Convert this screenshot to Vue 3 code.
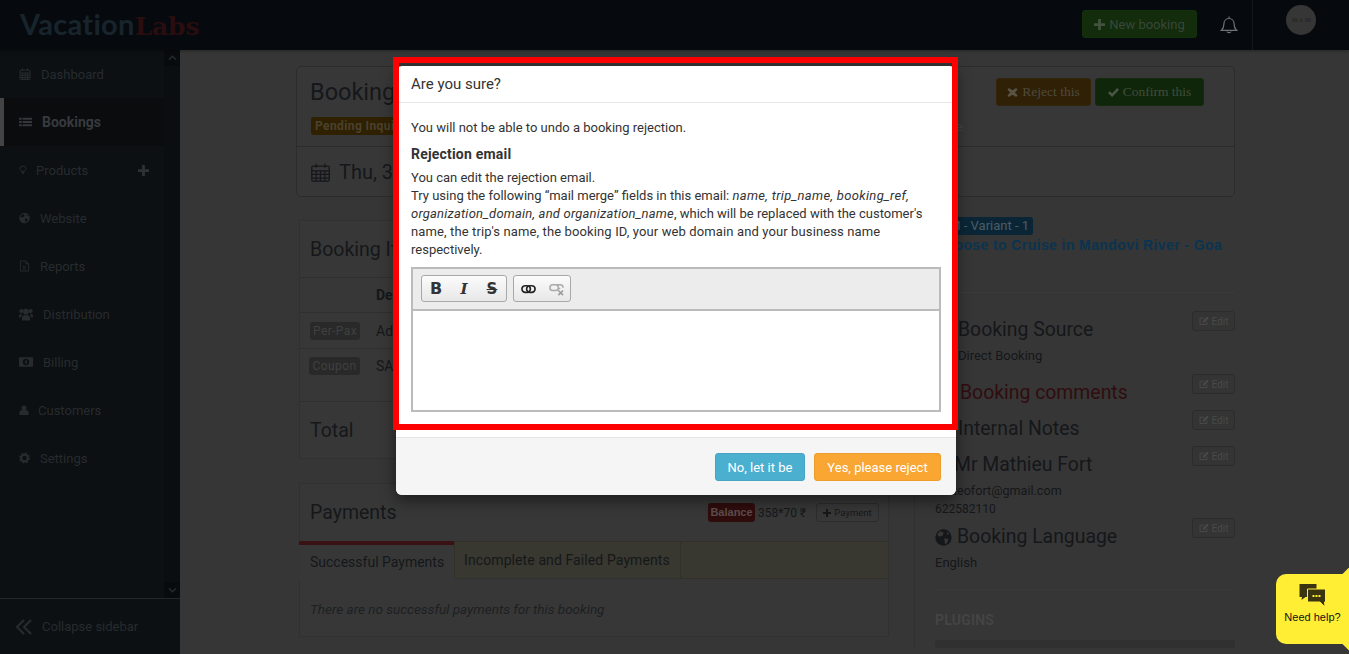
<script setup>
const nav = [
  { t: 'Dashboard', i: 'cal', w: 12, g: 10 },
  { t: 'Bookings', i: 'list', w: 13, g: 10, active: true },
  { t: 'Products', i: 'bulb', w: 8, g: 9, plus: true },
  { t: 'Website', i: 'globe', w: 11, g: 10 },
  { t: 'Reports', i: 'file', w: 11, g: 10 },
  { t: 'Distribution', i: 'users', w: 14, g: 10 },
  { t: 'Billing', i: 'money', w: 14, g: 10 },
  { t: 'Customers', i: 'user', w: 10, g: 9 },
  { t: 'Settings', i: 'cog', w: 11, g: 10 }
]
const sections = [
  { t: 'Booking Source', pad: 23, sub: ['Direct Booking'], cls: 'src' },
  { t: 'Booking comments', pad: 25, cls: 'red' },
  { t: 'Internal Notes', pad: 23 },
  { t: 'Mr Mathieu Fort', pad: 21, sub: ['mateofort@gmail.com', '622582110'], cls: 'contact' },
  { t: 'Booking Language', pad: 22, globe: true, sub: ['English'] }
]
</script>

<template>
  <div class="page">
    <header class="top">
      <div class="logo"><span class="vac">Vacation</span><span class="labs">Labs</span></div>
      <div class="top-right">
        <button class="new-btn">
          <svg class="ic11" viewBox="0 0 12 12"><path d="M4.500 0h3v4.500H12v3H7.500V12h-3V7.500H0v-3h4.500z" fill="#42523f" /></svg>
          New booking
        </button>
        <svg class="bell" viewBox="0 0 18 18" fill="none" stroke="#6f7274" stroke-width="1.200">
          <path d="M1.500 14.300c1.500-1.300 2.400-3 2.400-6.300 0-3 2.100-5.500 5.100-5.500s5.100 2.500 5.100 5.500c0 3.300.9 5 2.400 6.300z" />
          <path d="M7 15.500c.3 1.600 3.700 1.600 4 0M9 .5v2" />
        </svg>
        <div class="avatar-cell"><div class="avatar">30 x 30</div></div>
      </div>
    </header>

    <div class="row">
      <aside class="side">
        <div class="side-main">
          <nav class="nav">
            <a v-for="n in nav" :key="n.t" class="nav-item" :class="{ active: n.active }">
              <svg class="nav-ic" :style="{ width: n.w + 'px', marginRight: n.g + 'px' }" viewBox="0 0 24 24">
                <g v-if="n.i === 'cal'" fill="none" stroke="#272b2e" stroke-width="2">
                  <rect x="2" y="4" width="20" height="19" rx="1.500" />
                  <path d="M2 10h20M2 14.500h20M2 19h20M7 10v13M12 10v13M17 10v13M7 1v5M17 1v5" />
                </g>
                <path v-else-if="n.i === 'list'" fill="#33373a" d="M0 4h5v4H0zM6.500 4H24v4H6.500zM0 10h5v4H0zM6.500 10H24v4H6.500zM0 16h5v4H0zM6.500 16H24v4H6.500z" />
                <g v-else-if="n.i === 'bulb'" fill="none" stroke="#272b2e" stroke-width="3">
                  <path d="M7 16c0-3-4-4-4-8.500a9 7.500 0 0 1 18 0C21 12 17 13 17 16z" />
                  <path d="M8 20h8M10 23h4" />
                </g>
                <g v-else-if="n.i === 'globe'">
                  <circle cx="12" cy="12" r="11.500" fill="#272b2e" />
                  <path d="M7 3l5 2-1 4-5 2-3-3zM13 13l6 1-2 6-3 1zM17 4l3 3-3 1z" fill="#0c1013" />
                </g>
                <g v-else-if="n.i === 'file'" fill="none" stroke="#272b2e" stroke-width="2">
                  <path d="M3 1h12l6 6v16H3zM15 1v6h6" />
                  <path d="M8 11l7 9M15 11l-7 9" />
                </g>
                <g v-else-if="n.i === 'users'" fill="#272b2e">
                  <circle cx="12" cy="8" r="5" /><path d="M5 23v-5c0-3 2-4 7-4s7 1 7 4v5z" />
                  <circle cx="4" cy="7" r="3.500" /><circle cx="20" cy="7" r="3.500" />
                  <path d="M0 16c0-3 1-4 5-4l-2 6H0zM24 16c0-3-1-4-5-4l2 6h3z" />
                </g>
                <g v-else-if="n.i === 'money'">
                  <rect x="0" y="4" width="24" height="16" rx="1" fill="#272b2e" />
                  <circle cx="12" cy="12" r="5.500" fill="#0c1013" /><rect x="11" y="9" width="2.500" height="6" fill="#272b2e" />
                </g>
                <g v-else-if="n.i === 'user'" fill="#272b2e">
                  <circle cx="12" cy="7" r="6" /><path d="M1 24v-6c0-4 3-6 11-6s11 2 11 6v6z" />
                </g>
                <g v-else>
                  <circle cx="12" cy="12" r="7.500" fill="none" stroke="#272b2e" stroke-width="5" />
                  <circle cx="12" cy="12" r="10.500" fill="none" stroke="#272b2e" stroke-width="3" stroke-dasharray="4 4.250" />
                </g>
              </svg>
              <span>{{ n.t }}</span>
              <svg v-if="n.plus" class="nav-plus" viewBox="0 0 12 12"><path d="M4.500 0h3v4.500H12v3H7.500V12h-3V7.500H0v-3h4.500z" fill="#2e3235" /></svg>
            </a>
          </nav>
          <div class="scroll">
            <div class="sc-btn"><svg viewBox="0 0 10 6" class="chev"><path d="M1 5l4-4 4 4" fill="none" stroke="#272b2e" stroke-width="1.600" /></svg></div>
            <div class="sc-btn"><svg viewBox="0 0 10 6" class="chev"><path d="M1 1l4 4 4-4" fill="none" stroke="#272b2e" stroke-width="1.600" /></svg></div>
          </div>
        </div>
        <div class="collapse">
          <svg class="coll-ic" viewBox="0 0 16 16" fill="none" stroke="#272b2e" stroke-width="2.200"><path d="M8 1L1 8l7 7M15 1L8 8l7 7" /></svg>
          <span>Collapse sidebar</span>
        </div>
      </aside>

      <main class="main">
        <section class="summary">
          <div class="sum-head">
            <div class="sum-left">
              <h1>Booking</h1>
              <span class="pending">Pending Inquiry</span>
            </div>
            <span class="stray">e</span>
            <div class="sum-btns">
              <button class="serif-btn orange"><svg class="ic11" viewBox="0 0 12 12"><path d="M2 1L6 3.500 10 1l1.500 2L8.500 6l3 3-1.500 2L6 8.500 2 11 .5 9l3-3-3-3z" fill="#5a5245" /></svg> Reject this</button>
              <button class="serif-btn green"><svg class="ic11" viewBox="0 0 12 12"><path d="M0 6.500l2-2L4.500 7 10 1l2 2-7.500 8z" fill="#4a5646" /></svg> Confirm this</button>
            </div>
          </div>
          <div class="sum-date">
            <svg class="date-ic" viewBox="0 0 24 24" fill="none" stroke="#15171a" stroke-width="1.600">
              <rect x="1" y="4" width="22" height="19" rx="1.500" />
              <path d="M1 10h22M1 14.500h22M1 19h22M6.500 10v13M12 10v13M17.500 10v13M6.500 1v5M17.500 1v5" />
            </svg>
            <span>Thu, 3 January</span>
          </div>
        </section>

        <div class="cols">
          <div class="left">
            <section class="card items">
              <h2 class="card-title">Booking Items</h2>
              <div class="tr th"><b>Description</b></div>
              <div class="tr r1"><span class="tag perpax">Per-Pax</span><span>Adult</span></div>
              <div class="tr r2"><span class="tag coupon">Coupon</span><span>SAVE</span></div>
              <h2 class="total">Total</h2>
            </section>

            <section class="card pay">
              <div class="pay-head">
                <h2>Payments</h2>
                <div class="bal">
                  <span class="bal-tag">Balance</span>
                  <span class="bal-val">358*70 ₹</span>
                  <button class="pay-btn"><svg class="ic8" viewBox="0 0 12 12"><path d="M4.500 0h3v4.500H12v3H7.500V12h-3V7.500H0v-3h4.500z" fill="#15171a" /></svg> Payment</button>
                </div>
              </div>
              <div class="tabs">
                <div class="tab tab-on">Successful Payments</div>
                <div class="tab tab-off">Incomplete and Failed Payments</div>
                <div class="tab-rest"></div>
              </div>
              <p class="none">There are no successful payments for this booking</p>
            </section>
          </div>

          <div class="right">
            <span class="variant">PM - Variant - 1</span>
            <a class="trip">Choose to Cruise in Mandovi River - Goa</a>
            <div class="sections">
              <div v-for="s in sections" :key="s.t" class="sec" :class="s.cls">
                <div class="sec-head">
                  <h3 :style="{ paddingLeft: s.globe ? 0 : s.pad + 'px' }">
                    <svg v-if="s.globe" class="lang-ic" viewBox="0 0 24 24">
                      <circle cx="12" cy="12" r="11.500" fill="#15171a" />
                      <path d="M7 3l5 2-1 4-5 2-3-3zM13 13l6 1-2 6-3 1zM17 4l3 3-3 1z" fill="#363636" />
                    </svg>{{ s.t }}
                  </h3>
                  <button class="edit">
                    <svg class="ic10" viewBox="0 0 14 14" fill="none" stroke="#4a4a4a" stroke-width="1.400"><path d="M11 8v4H1.500V3H7" /><path d="M5 9.500l.5-2.500L11.500 1l2 2-6 6z" fill="#4a4a4a" stroke="none" /></svg>
                    Edit
                  </button>
                </div>
                <p v-for="l in s.sub" :key="l" class="sub">{{ l }}</p>
              </div>
            </div>
            <div class="plugins">
              <h4>PLUGINS</h4>
              <div class="plug-bar"></div>
            </div>
          </div>
        </div>
      </main>
    </div>

    <div class="modal">
      <div class="m-head">Are you sure?</div>
      <div class="m-body">
        <p class="p1">You will not be able to undo a booking rejection.</p>
        <h5>Rejection email</h5>
        <p class="p2">You can edit the rejection email.<br />Try using the following “mail merge” fields in this email: <i class="it1">name, trip_name, booking_ref,</i> <i class="it2">organization_domain, and organization_name</i>, which will be replaced with the customer's <span class="wide">name, the trip's name, the booking ID, your web domain and your business name</span> respectively.</p>
        <div class="editor">
          <div class="toolbar">
            <div class="group g1">
              <span class="tb b">B</span>
              <span class="tb i">I</span>
              <span class="tb s">S</span>
            </div>
            <div class="group g2">
              <svg class="chain" viewBox="0 0 16 10" fill="none" stroke="#222" stroke-width="1.800">
                <rect x="1" y="1.500" width="9" height="7" rx="3.500" />
                <rect x="6" y="1.500" width="9" height="7" rx="3.500" />
              </svg>
              <svg class="unlink" viewBox="0 0 16 12" fill="none" stroke="#aaa" stroke-width="1.600">
                <rect x="1" y="1" width="9" height="6" rx="3" />
                <path d="M8 1h4a3 3 0 0 1 3 3M10 5h2" />
                <path d="M10 7l5 5M15 7l-5 5" stroke="#999" />
              </svg>
            </div>
          </div>
          <div class="area"></div>
        </div>
      </div>
      <div class="m-foot">
        <button class="m-btn info">No, let it be</button>
        <button class="m-btn warn">Yes, please reject</button>
      </div>
      <div class="redbox"></div>
    </div>

    <div class="help">
      <i class="nub nub-t"></i><i class="nub nub-b"></i>
      <svg class="help-ic" viewBox="0 0 26 24">
        <path d="M0 1h17v13H6l-4 3 .5-3H0z" fill="#3a3410" />
        <path d="M8 6h18v13h-1l.5 5-5-5H8z" fill="#3a3410" stroke="#ffee33" stroke-width="1" />
        <path d="M13 12h2v2h-2zM16 12h2v2h-2zM19 12h2v2h-2z" fill="#ffee33" />
      </svg>
      <span>Need help?</span>
    </div>
  </div>
</template>

<style>
html, body { margin: 0; background: #363636; }
</style>

<style scoped>
* { box-sizing: border-box; }
.page { position: relative; width: 1349px; height: 654px; overflow: hidden; background: #363636; font-family: Roboto, sans-serif; color: #15171a; font-size: 13px; }
h1, h2, h3, h4, h5, p { margin: 0; font-weight: 400; }
button { font-family: inherit; padding: 0; }

.top { height: 50px; background: #060a0e; display: flex; justify-content: space-between; box-shadow: 0 1px 3px rgba(0,0,0,.3); position: relative; }
.logo { font-family: "Lato", sans-serif; font-size: 29px; font-weight: 700; padding: 7px 0 0 20px; letter-spacing: .3px; line-height: 34px; }
.vac { color: #18242c; }
.labs { color: #2a0d0f; font-family: "DejaVu Serif", serif; font-size: 25px; letter-spacing: -.2px; }
.top-right { display: flex; }
.new-btn { margin-top: 10px; width: 115px; height: 28px; background: #122c0c; border: 1px solid #14300d; border-radius: 3px; color: #38473a; font-size: 13px; display: flex; align-items: center; justify-content: center; gap: 4px; }
.ic11 { width: 11px; height: 11px; flex: none; }
.bell { width: 18px; height: 18px; margin: 16px 14px 0 23px; }
.avatar-cell { width: 97px; border-left: 1px solid #14181b; padding: 5px 0 0 33px; }
.avatar { width: 30px; height: 30px; border-radius: 50%; background: #363636; color: #1e1e1e; font: 6.5px/30px "Liberation Serif", serif; text-align: center; }

.row { display: flex; height: 604px; }
.side { width: 180px; background: #0c1013; display: flex; flex-direction: column; }
.side-main { flex: 1; display: flex; min-height: 0; }
.nav { width: 164px; }
.nav-item { height: 48px; display: flex; align-items: center; padding-left: 19px; color: #272b2e; font-size: 13px; position: relative; }
.nav-item.active { background: #0a0c0e; color: #373a3c; font-weight: 700; font-size: 14px; }
.nav-item.active::before { content: ""; position: absolute; left: 0; top: 0; bottom: 0; width: 4px; background: #444; }
.nav-ic { height: 16px; flex: none; }
.nav-plus { width: 11px; height: 11px; position: absolute; left: 138px; top: 19px; }
.scroll { width: 16px; background: #0a0e10; display: flex; flex-direction: column; justify-content: space-between; }
.sc-btn { height: 16px; background: #080b0d; display: flex; align-items: center; justify-content: center; }
.chev { width: 9px; height: 6px; }
.collapse { height: 56px; border-top: 1px solid #23272a; display: flex; align-items: center; padding-left: 16px; color: #272b2e; font-size: 13px; }
.coll-ic { width: 16px; height: 16px; margin-right: 10px; }

.main { flex: 1; padding: 16px 0 0 116px; min-width: 0; }
.summary { width: 939px; height: 131px; border: 1px solid #2c2c2c; border-radius: 5px; background: #373737; }
.sum-head { height: 80px; border-bottom: 1px solid #2c2c2c; display: flex; position: relative; }
.sum-left { padding: 11px 0 0 13px; width: 640px; }
.sum-left h1 { font-size: 23.5px; line-height: 28px; color: #15171a; }
.pending { display: inline-block; margin: 11px 0 0 1px; height: 18px; line-height: 18px; padding: 0 4px; background: #2f2000; border-radius: 3px; font-size: 12px; font-weight: 700; color: #4a412f; letter-spacing: .4px; white-space: nowrap; }
.stray { position: absolute; left: 659px; top: 52px; color: #444; font-size: 13px; }
.sum-btns { margin-left: auto; padding: 11px 30px 0 0; display: flex; gap: 4px; }
.serif-btn { height: 28px; border-radius: 3px; font: 13.5px "Liberation Serif", serif; display: flex; align-items: center; justify-content: center; gap: 4px; }
.orange { width: 95px; background: #2f2006; border: 1px solid #34240a; color: #504a3c; }
.green { width: 109px; background: #10260a; border: 1px solid #132a0c; color: #414d3b; }
.sum-date { height: 50px; display: flex; align-items: center; padding-left: 14px; font-size: 20px; color: #15171a; gap: 9px; }
.date-ic { width: 19px; height: 19px; }

.cols { display: flex; margin-top: 20px; }
.left { width: 590px; margin: 3px 0 0 3px; flex: none; }
.card { border: 1px solid #313131; background: #373737; box-shadow: 0 0 0 1px #353535; }
.items { height: 239px; }
.card-title { height: 57px; line-height: 58px; padding-left: 10px; font-size: 19.5px; color: #15171a; border-bottom: 1px solid #2f2f2f; }
.tr { display: flex; border-bottom: 1px solid #2f2f2f; padding-left: 76px; font-size: 14px; color: #15171a; align-items: flex-start; white-space: nowrap; }
.th { height: 35px; align-items: center; }
.th b { font-size: 14px; }
.r1 { height: 36px; padding-left: 10px; align-items: center; }
.r2 { height: 53px; padding: 8px 0 0 9px; }
.tag { width: 50px; height: 18px; background: #292929; color: #404040; border-radius: 3px; font-size: 12px; font-weight: 400; line-height: 18px; text-align: center; margin-right: 16px; letter-spacing: .4px; }
.coupon { width: 51px; }
.r2 span:last-child { line-height: 18px; }
.total { padding: 16px 0 0 10px; font-size: 19.5px; line-height: 26px; color: #15171a; }

.pay { margin-top: 24px; height: 154px; position: relative; }
.pay-head { height: 57px; display: flex; justify-content: space-between; padding: 16px 9px 0 10px; }
.pay-head h2 { font-size: 19.5px; line-height: 26px; color: #15171a; }
.bal { display: flex; height: 19px; margin-top: 3px; align-items: center; }
.bal-tag { width: 47px; height: 19px; background: #2f0c0c; border-radius: 3px; color: #5d4c4c; font: 700 11px/19px "Liberation Sans", sans-serif; text-align: center; }
.bal-val { width: 61px; padding-left: 3px; font-size: 12px; color: #15171a; }
.pay-btn { width: 63px; height: 19px; background: #373737; border: 1px solid #2c2c2c; border-radius: 3px; font-size: 9.5px; color: #15171a; display: flex; align-items: center; justify-content: center; gap: 3px; }
.ic8 { width: 8px; height: 8px; }
.tabs { display: flex; height: 38px; margin-left: -1px; font-size: 14px; color: #15171a; }
.tab { display: flex; align-items: center; padding-left: 11px; border-bottom: 1px solid #313131; }
.tab-on { width: 155px; background: #373737; border-top: 4px solid #3a1214; border-bottom: 0; }
.tab-off { width: 227px; background: #383830; border-top: 1px solid #313128; border-left: 1px solid #31312a; border-right: 1px solid #31312a; padding-left: 9px; letter-spacing: .1px; }
.tab-rest { flex: 1; background: #383830; border-top: 1px solid #313128; border-bottom: 1px solid #313128; }
.none { padding: 22px 0 0 10px; font-style: italic; font-size: 13.5px; color: #1d2022; }

.right { width: 321px; margin-left: 25px; padding-left: 20px; border-left: 1px solid #303030; flex: none; position: relative; }
.variant { display: block; width: max-content; height: 18px; line-height: 18px; padding: 0 4px; background: #0a2636; border-radius: 3px; color: #4d5c65; font-size: 13px; font-weight: 400; margin-left: 2px; }
.trip { display: block; font: 700 14px/18px "Liberation Sans", sans-serif; color: #0a3450; letter-spacing: .4px; margin-top: 1px; white-space: nowrap; padding-bottom: 38px; border-bottom: 1px solid #3a3a3a; }
.sections { margin-top: 18px; }
.sec-head { display: flex; justify-content: space-between; height: 36px; align-items: flex-start; }
h3 { font-size: 19.4px; line-height: 24px; padding-top: 7px; color: #15171a; white-space: nowrap; box-sizing: content-box; display: flex; align-items: center; }
.red h3 { color: #300d0f; }
.contact h3 { padding-left: 19px !important; }
.lang-ic { width: 17px; height: 17px; margin-right: 5px; }
.edit { width: 43px; height: 20px; background: #343434; border: 1px solid #2c2c2c; border-radius: 3px; color: #4a4a4a; font-size: 10px; display: flex; align-items: center; justify-content: center; gap: 3px; flex: none; }
.ic10 { width: 10px; height: 10px; }
.sub { font-size: 13px; line-height: 18px; color: #15171a; }
.src .sub { padding-left: 23px; margin-bottom: 9px; }
.contact .sub { font-size: 12px; }
.contact .sub:first-of-type { font-size: 12.6px; }
.plugins { border-top: 1px solid #3a3a3a; margin-top: 17px; padding-top: 21px; }
h4 { font-size: 14px; font-weight: 700; line-height: 18px; color: #444; letter-spacing: .2px; }
.plug-bar { height: 8px; margin-top: 11px; background: #303030; border-radius: 3px; }

.modal { position: absolute; left: 396px; top: 66px; width: 560px; height: 429px; background: #fff; border-radius: 6px; box-shadow: 0 5px 15px rgba(0,0,0,.5); color: #333; }
.m-head { height: 37px; border-bottom: 1px solid #e8e8e8; padding-left: 15px; font-size: 15px; line-height: 36px; color: #333; }
.m-body { height: 334px; padding: 16px 15px 0; font-size: 13px; line-height: 18px; }
.p1 { margin-bottom: 8px; }
h5 { font-size: 14px; font-weight: 700; line-height: 18px; margin-bottom: 6px; color: #333; letter-spacing: .2px; }
.p2 { margin-bottom: 8px; }
.it1 { letter-spacing: .33px; }
.it2 { letter-spacing: .2px; }
.wide { letter-spacing: .12px; }
.editor { height: 145px; border: 2px solid #bbb; border-width: 1px 2px 2px 2px; background: #fff; }
.toolbar { height: 43px; background: #ececec; border-top: 1px solid #bbb; border-bottom: 2px solid #bbb; display: flex; padding: 6px 0 0 8px; gap: 6px; }
.group { height: 27px; border: 1px solid #a8a8a8; border-radius: 3px; background: linear-gradient(#fbfbfb, #e8e8e8); display: flex; align-items: center; }
.g1 { width: 86px; padding-left: 7px; }
.g2 { width: 58px; padding-left: 7px; gap: 13px; }
.tb { width: 14px; margin-right: 14px; text-align: center; font: 700 16px "DejaVu Sans", sans-serif; color: #333; }
.tb.i { font-family: "DejaVu Serif", serif; font-style: italic; font-size: 15px; }
.tb.s { font-size: 15px; text-decoration: line-through; margin-right: 0; }
.chain { width: 15px; height: 10px; }
.unlink { width: 15px; height: 13px; margin-top: 2px; }
.area { height: 99px; }
.m-foot { height: 58px; background: #f5f5f5; border-top: 1px solid #e5e5e5; border-radius: 0 0 6px 6px; display: flex; justify-content: flex-end; padding: 15px 15px 0 0; gap: 9px; }
.m-btn { height: 28px; border-radius: 3px; color: #fff; font-size: 13px; }
.info { width: 90px; background: #4bafd0; border: 1px solid #46a5c5; }
.warn { width: 127px; background: #f9a633; border: 1px solid #ee9c2a; }
.redbox { position: absolute; left: -3px; top: -9px; width: 565px; height: 373px; border: 6px solid #f00; pointer-events: none; }

.help { position: absolute; left: 1276px; top: 574px; width: 80px; height: 70px; background: #ffee33; border-radius: 10px; display: flex; flex-direction: column; align-items: center; color: #111; font: 11px/14px "Liberation Sans", sans-serif; padding: 9px 7px 0 0; }
.help-ic { width: 27px; height: 24px; margin-bottom: 3px; }
.nub { position: absolute; width: 12px; height: 12px; background: #ffee33; transform: rotate(45deg); left: 68px; }
.nub-t { top: -5px; }
.nub-b { bottom: -5px; }
</style>
